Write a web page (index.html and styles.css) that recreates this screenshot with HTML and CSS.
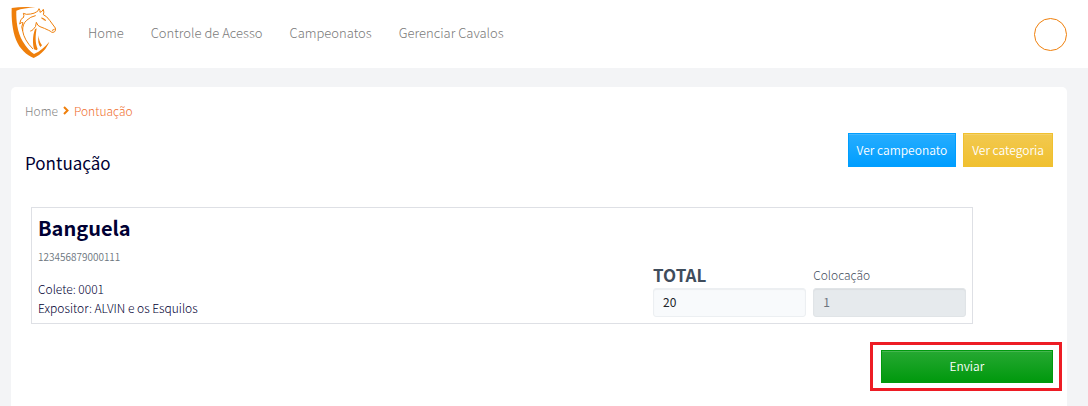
FILE: index.html
```html
<!DOCTYPE html>
<html lang="pt-BR">
<head>
<meta charset="utf-8">
<meta name="viewport" content="width=device-width, initial-scale=1">
<title>Pontuação</title>
<link rel="stylesheet" href="styles.css">
</head>
<body>
<header class="topbar">
  <a class="logo" href="#" aria-label="Início">
    <svg class="logo-icon" viewBox="33 18 138 159" aria-hidden="true">
      <path fill="#ef7f0b" d="M35 24Q65 19 106 22Q72 24 49 32C48 62 52 96 68 124C80 144 91 156 102 162C121 153 135 141 148 125C140 145 125 163 101 174C80 165 59 147 48 119C37 92 34 57 35 24Z"/>
      <path fill="#ef7f0b" d="M105 88C97 109 98 131 102 148L110 151L113 147C105 129 106 108 110 85Z"/>
      <path fill="#ef7f0b" d="M116 106C113 122 115 134 121 141L126 136C119 127 116 117 116 106Z"/>
      <g fill="none" stroke="#ef7f0b" stroke-width="3" stroke-linecap="round" stroke-linejoin="round">
        <path d="M71 51Q73 46 70 40Q78 45 92 42Q104 40 109 36Q115 34 117 26Q121 31 120 37Q126 36 130 28Q133 37 130 44Q140 48 149 61L166 84Q168 91 164 95Q159 99 154 96Q151 93 146 91Q134 85 120 80Q113 78 109 67Q109 81 99 89Q96 92 92 93"/>
        <path d="M71 51Q60 56 59 72Q64 66 69 68Q62 80 68 93Q67 72 80 61Q91 50 106 47"/>
        <path d="M68 93Q72 120 98 146M125 54Q131 54 137 61Q130 60 127 56M157 91L163 88"/>
      </g>
    </svg>
  </a>
  <nav class="menu" aria-label="Principal">
    <a href="#">Home</a>
    <a href="#">Controle de Acesso</a>
    <a href="#">Campeonatos</a>
    <a href="#">Gerenciar Cavalos</a>
  </nav>
  <button class="avatar" type="button" aria-label="Perfil"></button>
</header>
<main class="card">
  <nav class="breadcrumb" aria-label="Trilha">
    <a href="#">Home</a>
    <svg class="chevron" viewBox="0 0 6 9" aria-hidden="true"><path d="M1 1L4.500 4.500L1 8" fill="none" stroke="#ef7f0b" stroke-width="2"/></svg>
    <a class="current" href="#" aria-current="page">Pontuação</a>
  </nav>
  <div class="heading">
    <h1 class="title">Pontuação</h1>
    <div class="actions">
      <button class="btn btn-blue" type="button">Ver campeonato</button>
      <button class="btn btn-yellow" type="button">Ver categoria</button>
    </div>
  </div>
  <form class="form">
    <section class="entry">
      <div class="horse">
        <h2 class="name">Banguela</h2>
        <p class="number">123456879000111</p>
        <p class="detail">Colete: 0001</p>
        <p class="detail">Expositor: ALVIN e os Esquilos</p>
      </div>
      <div class="field">
        <label class="label label-total" for="total">TOTAL</label>
        <input class="input" id="total" type="text" value="20">
      </div>
      <div class="field">
        <label class="label" for="place">Colocação</label>
        <input class="input" id="place" type="text" value="1" disabled>
      </div>
    </section>
    <div class="submit">
      <button class="btn btn-green" type="submit">Enviar</button>
    </div>
  </form>
</main>
</body>
</html>
```
FILE: styles.css
```css
* {
  box-sizing: border-box;
}

body {
  margin: 0;
  background: #f3f4f6;
  color: #000033;
  font-family: "Noto Sans CJK JP", "Noto Sans", sans-serif;
  font-size: 12px;
  line-height: 19px;
}

h1, h2, p {
  margin: 0;
}

a {
  color: inherit;
  text-decoration: none;
}

button, input {
  font: inherit;
}

.topbar {
  display: flex;
  align-items: center;
  padding: 6px 21px 6px 11px;
  background: #fff;
}

.logo {
  display: flex;
  height: 56px;
}

.logo-icon {
  width: 46px;
  height: 53px;
}

.menu {
  display: flex;
  flex: 1;
  gap: 27px;
  margin-left: 31px;
  padding-bottom: 4px;
  color: #7a7a7a;
  font-size: 13px;
  font-weight: 300;
}

.avatar {
  width: 33px;
  height: 33px;
  padding: 0;
  border: 1px solid #ef7f0b;
  border-radius: 50%;
  background: #fff;
}

.card {
  min-height: calc(100vh - 87px);
  margin: 19px 21px 0 11px;
  padding: 14px 14px 15px;
  border-radius: 5px 5px 0 0;
  background: #fff;
}

.breadcrumb {
  display: flex;
  align-items: center;
  gap: 5px;
  color: #858585;
  font-weight: 300;
}

.chevron {
  width: 6px;
  height: 9px;
}

.current {
  color: #ef7030;
}

.heading {
  display: flex;
  align-items: flex-start;
  justify-content: space-between;
  margin-top: 13px;
}

.title {
  padding-top: 17px;
  font-size: 17px;
  font-weight: 400;
  line-height: 26px;
}

.actions {
  display: flex;
  gap: 7px;
}

.btn {
  height: 34px;
  padding: 0 8px 2px;
  border: 1px solid;
  box-shadow: inset 0 1px 0 rgba(255, 255, 255, 0.15);
  color: #fff;
  font-weight: 350;
}

.btn-blue {
  border-color: #009eff;
  background: linear-gradient(#26adff, #009eff);
}

.btn-yellow {
  border-color: #f0c030;
  background: linear-gradient(#f2c94f, #f0c030);
}

.btn-green {
  display: block;
  width: 100%;
  height: 33px;
  border-color: #00990d;
  background: linear-gradient(#26a832, #00990d);
}

.entry {
  display: grid;
  grid-template-columns: 1fr 16.5% 16.5%;
  align-items: end;
  gap: 7px;
  width: calc(100% * 11 / 12);
  margin: 31px 0 0 6px;
  padding: 5px 6px 6px;
  border: 1px solid #dee0e5;
}

.name {
  font-size: 20px;
  font-weight: 700;
  line-height: 30px;
}

.number {
  margin: 4px 0 13px;
  color: #6c757d;
  font-size: 10px;
  font-weight: 350;
}

.detail {
  font-weight: 300;
}

.field {
  display: flex;
  flex-direction: column;
}

.label {
  margin-bottom: 4px;
  color: #3f4d5c;
  font-weight: 300;
}

.label-total {
  font-size: 17px;
  font-weight: 700;
}

.input {
  width: 100%;
  height: 29px;
  padding: 0 9px 2px;
  border: 1px solid #eceff2;
  border-radius: 3px;
  background: #f8fafc;
  box-shadow: inset 0 1px 1px rgba(0, 0, 0, 0.05);
  color: #212529;
}

.input:disabled {
  border-color: #e0e4e7;
  background: #e6eaed;
  color: #6c757d;
}

.submit {
  width: calc(100% / 6 + 21px);
  margin: 18px -9px 0 auto;
  padding: 5px 6px 5px 8px;
  border: 3px solid #ed1c24;
}
```
